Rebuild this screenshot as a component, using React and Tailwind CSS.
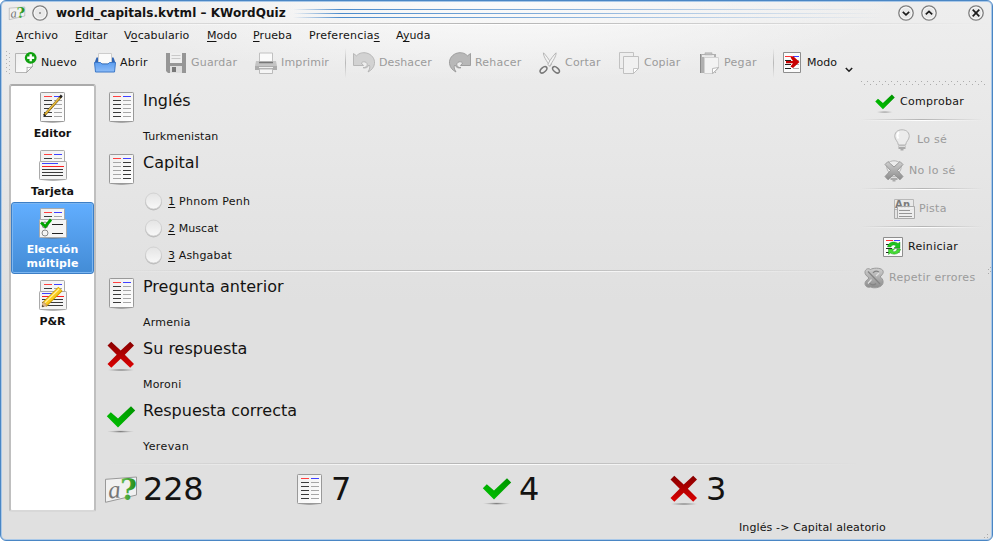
import React from "react";

/* ---------- shared drawing helpers ---------- */

const Shadow = ({ cx = 16, cy = 29.5, rx = 12 }) => (
  <ellipse cx={cx} cy={cy} rx={rx} ry="1.4" fill="url(#shadow)" />
);

const Defs = () => (
  <svg width="0" height="0" className="absolute">
    <defs>
      <radialGradient id="shadow">
        <stop offset="0" stopColor="#555" stopOpacity="0.75" />
        <stop offset="1" stopColor="#888" stopOpacity="0" />
      </radialGradient>
      <linearGradient id="paper" x1="0" y1="0" x2="1" y2="1">
        <stop offset="0" stopColor="#eeeeee" />
        <stop offset="1" stopColor="#ffffff" />
      </linearGradient>
      <linearGradient id="red" x1="0" y1="0" x2="0" y2="1">
        <stop offset="0" stopColor="#860000" />
        <stop offset="1" stopColor="#dd0000" />
      </linearGradient>
      <linearGradient id="green" x1="1" y1="0" x2="0" y2="1">
        <stop offset="0" stopColor="#009200" />
        <stop offset="1" stopColor="#00c400" />
      </linearGradient>
      <linearGradient id="qmark" x1="0" y1="0" x2="1" y2="0">
        <stop offset="0" stopColor="#6fc05a" />
        <stop offset="1" stopColor="#1d8a12" />
      </linearGradient>
      <linearGradient id="blue" x1="0" y1="0" x2="0" y2="1">
        <stop offset="0" stopColor="#5b9df0" />
        <stop offset="1" stopColor="#8cbcf8" />
      </linearGradient>
      <linearGradient id="gray" x1="0" y1="0" x2="0" y2="1">
        <stop offset="0" stopColor="#cfcfcf" />
        <stop offset="1" stopColor="#8c8c8c" />
      </linearGradient>
      <linearGradient id="radio" x1="0" y1="0" x2="0" y2="1">
        <stop offset="0" stopColor="#e4e4e4" />
        <stop offset="1" stopColor="#f8f8f8" />
      </linearGradient>
    </defs>
  </svg>
);

const Svg = ({ size = 32, box = 32, children }) => (
  <svg width={size} height={size} viewBox={`0 0 ${box} ${box}`} className="block shrink-0 overflow-visible">
    {children}
  </svg>
);

/* ---------- 32px icons ---------- */

const ColumnsArt = ({ left = "#3a3a3a", right = "#a6a6a6" }) => (
  <g>
    <Shadow cx={16.5} cy={31} rx={11} />
    <rect x="4.5" y="1.5" width="24" height="29" rx="0.8" fill="url(#paper)" stroke="#999" />
    <rect x="8" y="5" width="8" height="1" fill="#ff4040" />
    <rect x="18" y="5" width="8" height="1" fill="#4040ff" />
    <path d="M8 9.5h8M8 13.5h8M8 17.5h8M8 21.5h8M8 25.5h8" stroke={left} />
    <path d="M18 9.5h8M18 13.5h8M18 17.5h8M18 21.5h8M18 25.5h8" stroke={right} />
  </g>
);

const ColumnsIcon = (p) => (
  <Svg><ColumnsArt {...p} /></Svg>
);

const EditorIcon = () => (
  <Svg>
    <ColumnsArt />
    <path d="M8 24.5L25 5.5" stroke="#4b3a12" strokeWidth="2.6" />
    <path d="M9 23.5L24 6.8" stroke="#d9a520" strokeWidth="1.7" />
    <path d="M9.3 22.4L23 7" stroke="#ffe070" strokeWidth="0.7" />
    <path d="M7.2 26l1-3 2 1.7z" fill="#222" />
    <path d="M24 4.5l2 1.6" stroke="#222" strokeWidth="2.4" />
  </Svg>
);

const CardArt = () => (
  <g>
    <Shadow cx={17} cy={31} rx={13} />
    <rect x="4.5" y="1.5" width="24" height="20" rx="0.8" fill="url(#paper)" stroke="#aaa" />
    <rect x="8" y="5" width="8" height="1" fill="#ff4040" />
    <rect x="18" y="5" width="8" height="1" fill="#4040ff" />
    <path d="M8 9.5h8" stroke="#3a3a3a" />
    <path d="M18 9.5h8" stroke="#a6a6a6" />
    <rect x="3.5" y="12.5" width="27" height="18" rx="0.8" fill="#f5f5f5" stroke="#aaa" />
  </g>
);

const CardLines = () => (
  <g>
    <rect x="6" y="14" width="16" height="1" fill="#4040ff" />
    <rect x="6" y="17" width="22" height="1" fill="#ff2020" />
    <path d="M6 20.5h21M6 23.5h21M6 26.5h21" stroke="#3a3a3a" />
  </g>
);

const CardIcon = () => (
  <Svg>
    <CardArt />
    <CardLines />
  </Svg>
);

const ChoiceIcon = () => (
  <Svg>
    <CardArt />
    <circle cx="9" cy="18" r="3" fill="#f4f4f4" stroke="#888" />
    <circle cx="9" cy="26" r="3" fill="#f4f4f4" stroke="#888" />
    <path d="M16 17.5h11M16 26.5h11" stroke="#222" />
    <path d="M5 15.5l4.3 4L15 12.5" fill="none" stroke="#00a400" strokeWidth="2.8" />
  </Svg>
);

const QaIcon = () => (
  <Svg>
    <CardArt />
    <CardLines />
    <path d="M8.3 25.7L24.5 9.8" stroke="#c79a00" strokeWidth="6" />
    <path d="M8.6 25.2L24.2 9.9" stroke="#fccb1c" strokeWidth="4.4" />
    <path d="M8.6 24L23 10" stroke="#fff0a0" strokeWidth="1.2" />
    <path d="M6 28l1-5.4 4.3 4z" fill="#e2b98a" stroke="#a67c3e" strokeWidth="0.5" />
    <path d="M6 28l.5-2 1.6 1.4z" fill="#333" />
  </Svg>
);

const CrossIcon = () => (
  <Svg>
    <Shadow cx={16} cy={31} rx={14} />
    <path
      d="M2.500 6.500L6.300 2.700 15.700 11.600 25.200 2.700 29 6.500 19.800 15.700 29 25 25.200 28.800 15.700 19.700 6.300 28.800 2.500 25 11.700 15.700z"
      fill="url(#red)"
    />
  </Svg>
);

const CheckIcon = ({ size = 32 }) => (
  <Svg size={size}>
    <Shadow cx={15.5} cy={30.6} rx={13.5} />
    <path d="M1.800 15.200L5.800 11.200 13 17.600 26 5.200 30.200 9.400 13 26.600z" fill="url(#green)" />
  </Svg>
);

const QuizIcon = ({ size = 32 }) => (
  <Svg size={size}>
    <path d="M.5 6.3L31.5 4V22L.5 29.3z" fill="#f1f1f1" stroke="#999" />
    <text x="3.500" y="25.500" fontFamily="Liberation Serif, serif" fontStyle="italic" fontSize="25" fill="#777" transform="rotate(-5 4 24)">a</text>
    <text x="15" y="26.500" fontFamily="DejaVu Serif, serif" fontWeight="bold" fontSize="29" fill="url(#qmark)">?</text>
  </Svg>
);

/* ---------- 22px icons ---------- */

const NewIcon = () => (
  <Svg size={22} box={22}>
    <path d="M.5 1.5h17v13l-6 6H.5z" fill="url(#paper)" stroke="#b5b5b5" />
    <path d="M17.5 14.5l-6 6c.8-2 .8-3.5.4-5.2 2 .5 3.600.2 5.600-.8z" fill="#fff" stroke="#999" strokeWidth="0.8" />
    <circle cx="15.700" cy="5.800" r="5.900" fill="#10a010" />
    <path d="M15.700 2.300v7M12.200 5.800h7" stroke="#fff" strokeWidth="2.400" />
  </Svg>
);

const OpenIcon = () => (
  <Svg size={22} box={22}>
    <path d="M.5 11L2.500 5.500h17L21.500 11z" fill="#2f64b4" />
    <path d="M4.500 1.500h13v10h-13z" fill="#fafafa" stroke="#ccc" />
    <path d="M.5 10.500h6l1.500 1.500h6l1.500-1.500h6l-1 9.500H1.500z" fill="url(#blue)" stroke="#3c78c8" />
  </Svg>
);

const SaveIcon = () => (
  <Svg size={22} box={22}>
    <path d="M1 1h20v20H3l-2-2z" fill="#969696" />
    <path d="M5 1h12v10H5z" fill="#efefef" />
    <path d="M6.500 3.500h9M6.500 6.500h9" stroke="#c9c9c9" />
    <path d="M5 14h12v7H5z" fill="#dedede" />
    <path d="M7 15h4v5H7z" fill="#777" />
  </Svg>
);

const PrintIcon = () => (
  <Svg size={22} box={22}>
    <path d="M4.500 1h13v9h-13z" fill="#fafafa" stroke="#c0c0c0" />
    <path d="M1 9h20l1 5H0z" fill="#c4c4c4" />
    <path d="M4 10.500h14" stroke="#777" strokeWidth="1.600" />
    <path d="M0 14h22v4H0z" fill="#acacac" />
    <path d="M4 15.500h14" stroke="#eee" />
    <path d="M4.500 17h13v4.500h-13z" fill="#f5f5f5" stroke="#bbb" />
  </Svg>
);

const CurlArt = ({ fill, edge }) => (
  <g>
    <path
      d="M.5 1.500L3.500 3.800C6.500.8 10 .2 13.500 1c5 1.200 8.500 5.500 8 10.500-.4 4-3 6.700-6.500 8.500 1.800-3 2.500-5.500 1-7-1.200 2.600-3.500 3.500-6 2.700 2.500 0 4.200-1.200 4.200-3 0-2-1.700-3.200-3.700-2.900-1 .2-1.600.6-2.200 1.200L10.500 13.500H.5z"
      fill={fill}
      stroke={edge}
      strokeWidth="0.900"
      strokeLinejoin="round"
    />
  </g>
);

const UndoIcon = () => (
  <Svg size={22} box={22}><CurlArt fill="#d2d2d2" edge="#b2b2b2" /></Svg>
);

const RedoIcon = () => (
  <Svg size={22} box={22}>
    <g transform="translate(22 0) scale(-1 1)"><CurlArt fill="#b8b8b8" edge="#989898" /></g>
  </Svg>
);

const CutIcon = () => (
  <Svg size={22} box={22}>
    <path d="M4.500.8c-.5 3 3 8 6.500 13.500l1.600-2C10 7 7 3.500 4.500.8z" fill="#f4f4f4" stroke="#a8a8a8" strokeWidth="0.800" />
    <path d="M17 .8c.5 3-3 8-6.500 13.500l-1.600-2C11.500 7 14.500 3.500 17 .8z" fill="#f4f4f4" stroke="#a8a8a8" strokeWidth="0.800" />
    <ellipse cx="4.500" cy="17.800" rx="4" ry="2.300" transform="rotate(-42 4.500 17.800)" fill="none" stroke="#777" strokeWidth="1.500" />
    <ellipse cx="17" cy="17.800" rx="4" ry="2.300" transform="rotate(42 17 17.800)" fill="none" stroke="#777" strokeWidth="1.500" />
  </Svg>
);

const CopyIcon = () => (
  <Svg size={22} box={22}>
    <path d="M1.500.5h14v16h-14z" fill="#eee" stroke="#c2c2c2" />
    <path d="M5.500 4.500h15v12l-5 5h-10z" fill="#f1f1f1" stroke="#c0c0c0" />
    <path d="M20.500 16.500l-5 5v-5z" fill="#fff" stroke="#b8b8b8" strokeWidth="0.800" />
  </Svg>
);

const PasteIcon = () => (
  <Svg size={22} box={22}>
    <path d="M2 2h16v19H2z" fill="#b0b0b0" />
    <path d="M2.500 2v19" stroke="#8c8c8c" />
    <path d="M4 3h12v2H4z" fill="#e9e9e9" />
    <path d="M7 .8h7v2H7z" fill="#c4c4c4" stroke="#aaa" strokeWidth="0.600" />
    <path d="M6.500 5.500h14v11l-5 5h-9z" fill="#f3f3f3" stroke="#d2d2d2" />
    <path d="M20.500 15.500l-6 6v-5z" fill="#fff" stroke="#aaa" strokeWidth="0.800" />
  </Svg>
);

const SmallList = () => (
  <g>
    <rect x="4" y="4" width="7" height="1" fill="#ff3030" />
    <rect x="12" y="4" width="6" height="1" fill="#4040ff" />
    <path d="M4 8.500h6M4 12.500h6M4 16.500h6" stroke="#222" />
    <path d="M12 8.500h6M12 12.500h6M12 16.500h6" stroke="#aaa" />
  </g>
);

const ModeIcon = () => (
  <Svg size={22} box={22}>
    <path d="M2.500.5h17v20h-17z" fill="#fbfbfb" stroke="#8e8e8e" />
    <SmallList />
    <path d="M5 9h7L9.500 5.500 12 4l6.500 6-6.500 6-2.500-1.500L12 11.200H5z" fill="#c80000" />
  </Svg>
);

const BulbArt = () => (
  <g>
    <path d="M11 .8c-5 0-7.500 3.200-7.200 7 .3 3.200 3.200 4.600 3.600 8.200h7.200c.4-3.600 3.300-5 3.600-8.200.3-3.800-2.200-7-7.200-7z" fill="#ececec" stroke="#b5b5b5" />
    <path d="M8 3.500c-2 1-2 4-.5 6" fill="none" stroke="#fff" strokeWidth="2" />
    <path d="M7.500 16.500h7v3.500h-2v1.500h-3V20h-2z" fill="#aaa" />
    <path d="M8 17.500h6" stroke="#ddd" />
  </g>
);

const BulbIcon = () => (
  <Svg size={22} box={22}><BulbArt /></Svg>
);

const NotKnownIcon = () => (
  <Svg size={22} box={22}>
    <BulbArt />
    <path
      d="M2 4.500l3-3L11 7l6-5.500 3 3L14.500 10.500l5.500 6-3 3.300L11 14l-6 5.800-3-3.300 5.500-6z"
      fill="url(#gray)"
      stroke="#8a8a8a"
      strokeWidth="0.800"
    />
  </Svg>
);

const HintIcon = () => (
  <Svg size={22} box={22}>
    <path d="M1.500 1.500h19v10h-19z" fill="#e9e9e9" stroke="#b8b8b8" />
    <text x="2" y="9.500" fontFamily="DejaVu Sans, sans-serif" fontWeight="bold" fontSize="10" fill="#7a7a7a">An</text>
    <path d="M4.500 8.500h17v12h-17z" fill="#f0f0f0" fillOpacity="0.850" stroke="#aaa" />
    <path d="M6 12.500h11M6 15.500h13M6 18.500h13" stroke="#969696" />
    <path d="M1.500 11v9.500h3" fill="none" stroke="#aaa" />
  </Svg>
);

const RestartIcon = () => (
  <Svg size={22} box={22}>
    <path d="M1.500 1.500h19v19h-19z" fill="#fbfbfb" stroke="#8e8e8e" />
    <SmallList />
    <path d="M5.500 11c.5-5 7-6.500 10.500-3.500l2-1.500v6h-6l2-2c-2-2-4.500-1-5 1z" fill="#20c420" stroke="#128a12" strokeWidth="0.400" />
    <path d="M18.500 13c-.5 5-7 6.500-10 4l-2 1.500V13h6l-2 2c1.500 1.500 4 .5 4.500-2z" fill="#45dc35" stroke="#128a12" strokeWidth="0.400" />
  </Svg>
);

const RepeatIcon = () => (
  <Svg size={22} box={22}>
    <path
      d="M2 4.500C3 1.500 5.500 1 7.500 2.500 10 .8 17 .5 19.500 3c1.800 2.500 0 4.500-2.500 7 2.500 1 4 4.500 2.500 7.500-2.500 3.500-9 4-12 2.500-2.500 1-5.500-.5-5.500-3.500 0-2 1.500-3 4-5.500-2.500-2-4.500-4-4-6.500z"
      fill="url(#gray)"
      stroke="#999"
    />
    <path d="M5 4.500l12 12.500M16 5c-3-1.500-5-.5-6 1M6 15.500c2 3 5 3 7 1" fill="none" stroke="#848484" strokeWidth="1.200" />
    <path d="M8.500 12.500l-3.500 4M16 6l-3 3" stroke="#e0e0e0" strokeWidth="1.200" />
  </Svg>
);

/* ---------- window pieces ---------- */

const WindowButton = ({ children }) => (
  <svg width="16" height="16" viewBox="0 0 16 16" className="block shrink-0">
    <circle cx="8" cy="8" r="7.200" fill="#e9e9e9" stroke="#7d7d7d" strokeWidth="1.300" />
    <circle cx="8" cy="8" r="5.800" fill="none" stroke="#fafafa" strokeWidth="0.800" />
    <g fill="none" stroke="#1c1c1c" strokeWidth="1.700">{children}</g>
  </svg>
);

const TitleLine = () => (
  <div className="h-px bg-[linear-gradient(to_right,#4a8acb00,#4a8acb_8%,#8fb5dd_50%,#8fb5dd00)]" />
);

const TitleBar = () => (
  <header className="flex h-[24px] shrink-0 items-center pl-[8px] pr-[8px]">
    <QuizIcon size={16} />
    <div className="ml-[7px]">
      <WindowButton><circle cx="8" cy="8" r="0.700" fill="#222" stroke="none" /></WindowButton>
    </div>
    <h1 className="ml-[8px] w-[237px] whitespace-nowrap text-[12px] font-bold leading-[24px] tracking-[0.03px]">world_capitals.kvtml – KWordQuiz</h1>
    <div className="mt-px flex w-[590px] flex-col gap-[3px]">
      <TitleLine />
      <TitleLine />
      <TitleLine />
    </div>
    <div className="ml-auto flex">
      <WindowButton><path d="M4.800 6.800L8 9.800l3.200-3" /></WindowButton>
      <div className="ml-[7px]"><WindowButton><path d="M4.800 9.300L8 6.300l3.200 3" /></WindowButton></div>
      <div className="ml-[31px]"><WindowButton><path d="M4.700 4.700l6.600 6.600M11.300 4.700l-6.600 6.600" /></WindowButton></div>
    </div>
  </header>
);

const MENUS = [
  ["", "A", "rchivo", "w-[59px] tracking-[0.15px]"],
  ["", "E", "ditar", "w-[49px]"],
  ["V", "o", "cabulario", "w-[83px] tracking-[0.1px]"],
  ["", "M", "odo", "w-[46px]"],
  ["", "P", "rueba", "w-[56px] tracking-[0.1px]"],
  ["Preferencia", "s", "", "w-[87px] tracking-[0.25px]"],
  ["A", "y", "uda", "w-[50px] tracking-[0.1px]"],
];

const MenuBar = () => (
  <nav className="flex h-[21px] shrink-0 items-center pl-[15px] pt-px">
    {MENUS.map(([a, key, b, w]) => (
      <span key={a + key + b} className={`${w} shrink-0 whitespace-nowrap`}>
        {a}<span className="underline decoration-1 underline-offset-2">{key}</span>{b}
      </span>
    ))}
  </nav>
);

const Tool = ({ icon, label, w, disabled }) => (
  <div className={`flex shrink-0 items-center gap-[4px] whitespace-nowrap ${w} ${disabled ? "text-[#9b9b9b]" : ""}`}>
    {icon}
    <span>{label}</span>
  </div>
);

const VSep = ({ w }) => (
  <div className={`${w} shrink-0`}>
    <div className="h-[30px] w-px bg-linear-to-b from-transparent via-[#b8b8b8] to-transparent" />
  </div>
);

const ToolBar = () => (
  <div className="mt-px flex h-[32px] shrink-0 items-center pl-[5px]">
    <svg width="9" height="26" className="block shrink-0">
      {[0, 1, 2, 3, 4, 5].map((i) => (
        <g key={i} fill="#b4b4b4">
          <rect x="0" y={i * 4 + 1} width="1" height="1" />
          <rect x="3" y={i * 4 + 3} width="1" height="1" />
        </g>
      ))}
    </svg>
    <Tool icon={<NewIcon />} label="Nuevo" w="w-[79px] tracking-[0.1px]" />
    <Tool icon={<OpenIcon />} label="Abrir" w="w-[71px] tracking-[0.2px]" />
    <Tool icon={<SaveIcon />} label="Guardar" w="w-[90px] tracking-[0.2px]" disabled />
    <Tool icon={<PrintIcon />} label="Imprimir" w="w-[90px] tracking-[0.15px]" disabled />
    <VSep w="w-[8px]" />
    <Tool icon={<UndoIcon />} label="Deshacer" w="w-[96px] tracking-[0.1px]" disabled />
    <Tool icon={<RedoIcon />} label="Rehacer" w="w-[90px] tracking-[0.2px]" disabled />
    <Tool icon={<CutIcon />} label="Cortar" w="w-[79px] tracking-[0.2px]" disabled />
    <Tool icon={<CopyIcon />} label="Copiar" w="w-[80px] tracking-[0.1px]" disabled />
    <Tool icon={<PasteIcon />} label="Pegar" w="w-[75px] tracking-[0.3px]" disabled />
    <VSep w="w-[8px]" />
    <Tool icon={<ModeIcon />} label="Modo" w="w-[64px]" />
    <svg width="8" height="6" className="mt-[14px] block shrink-0">
      <path d="M.8 1L4 4.200 7.200 1" fill="none" stroke="#222" strokeWidth="1.600" />
    </svg>
  </div>
);

const View = ({ icon, lines, h, selected }) => (
  <div
    className={`flex ${h} shrink-0 flex-col text-center font-bold leading-[14px] ${
      selected
        ? "rounded-[3px] border border-[#3d7fc6] bg-linear-to-b from-[#62aeff] to-[#438cd6] pt-[4px] text-white shadow-[inset_0_0_0_1px_#7cb6f1]"
        : "pt-[5px]"
    }`}
  >
    <div className={selected ? "pl-[24px]" : "pl-[25px]"}>{icon}</div>
    <div className={selected ? "mt-[4px] tracking-[0.1px]" : "mt-[4px]"}>
      {lines.map((l) => <div key={l}>{l}</div>)}
    </div>
  </div>
);

const SideBar = () => (
  <aside className="ml-[8px] mt-[5px] flex h-[428px] w-[87px] shrink-0 flex-col rounded-[3px] border-2 border-[#bfbfbf] border-b-[#d8d8d8] border-t-[#ababab] bg-white">
    <View icon={<EditorIcon />} lines={["Editor"]} h="h-[58px]" />
    <View icon={<CardIcon />} lines={["Tarjeta"]} h="h-[58px]" />
    <View icon={<ChoiceIcon />} lines={["Elección", "múltiple"]} h="h-[72px]" selected />
    <View icon={<QaIcon />} lines={["P&R"]} h="h-[58px]" />
  </aside>
);

const Section = ({ icon, title, value, h = "h-[62px]", track = "" }) => (
  <section className={`flex ${h} shrink-0 gap-[6px]`}>
    {icon}
    <div>
      <h2 className="h-[20px] whitespace-nowrap text-[16px] leading-[20px]">{title}</h2>
      {value && <p className={`mt-[19px] leading-[14px] ${track}`}>{value}</p>}
    </div>
  </section>
);

const Option = ({ n, text, track = "" }) => (
  <label className="flex h-[27px] items-center pl-[40px]">
    <svg width="18" height="20" className="block">
      <circle cx="8.500" cy="10.200" r="8.300" fill="#bcbcbc" />
      <circle cx="8.500" cy="9" r="8" fill="url(#radio)" stroke="#cacaca" strokeWidth="0.700" />
    </svg>
    <span className={`ml-[5px] whitespace-pre ${track}`}><span className="underline decoration-1 underline-offset-2">{n}</span> {text}</span>
  </label>
);

const HRule = ({ className }) => (
  <div className={`shrink-0 ${className}`}>
    <div className="h-px bg-linear-to-r from-transparent via-[#b4b4b4] to-transparent" />
    <div className="h-px bg-linear-to-r from-transparent via-white to-transparent" />
  </div>
);

const Stat = ({ icon, value, w = "w-[188px]" }) => (
  <div className={`flex ${w} shrink-0 gap-[6px]`}>
    {icon}
    <span className="text-[32px] leading-[32px] tracking-[-0.2px]">{value}</span>
  </div>
);

const QuizPanel = () => (
  <main className="flex w-[756px] shrink-0 flex-col pl-[9px] pt-[12px]">
    <Section icon={<ColumnsIcon />} title="Inglés" value="Turkmenistan" track="tracking-[0.1px]" />
    <Section icon={<ColumnsIcon left="#a6a6a6" right="#3a3a3a" />} title="Capital" h="h-[35px]" />
    <div className="h-[81px] shrink-0">
      <Option n="1" text="Phnom Penh" track="tracking-[0.27px]" />
      <Option n="2" text="Muscat" track="tracking-[0.08px]" />
      <Option n="3" text="Ashgabat" track="tracking-[0.15px]" />
    </div>
    <HRule className="mb-[5px] mt-px w-[755px]" />
    <Section icon={<ColumnsIcon />} title="Pregunta anterior" value="Armenia" track="tracking-[0.25px]" />
    <Section icon={<CrossIcon />} title="Su respuesta" value="Moroni" track="tracking-[0.2px]" />
    <Section icon={<CheckIcon />} title="Respuesta correcta" value="Yerevan" track="tracking-[0.4px]" />
    <HRule className="mb-[8px] w-[755px]" />
    <div className="flex">
      <Stat icon={<QuizIcon />} value="228" />
      <Stat icon={<ColumnsIcon />} value="7" />
      <Stat icon={<CheckIcon />} value="4" w="w-[187px]" />
      <Stat icon={<CrossIcon />} value="3" />
    </div>
  </main>
);

const Action = ({ icon, label, disabled, h = "h-[31px]", pad }) => (
  <div className={`flex ${h} ${pad} shrink-0 items-center gap-[4px] whitespace-nowrap tracking-[0.3px] ${disabled ? "text-[#9b9b9b]" : ""}`}>
    {icon}
    <span>{label}</span>
  </div>
);

const ActionPanel = () => (
  <aside className="flex w-[130px] shrink-0 flex-col pt-[2px]">
    <svg width="126" height="5" className="block shrink-0">
      {Array.from({ length: 21 }, (_, i) => (
        <g key={i} fill="#acacac">
          <rect x={i * 6} y="0" width="1" height="1" />
          <rect x={i * 6 + 3} y="3" width="1" height="1" />
        </g>
      ))}
    </svg>
    <Action icon={<CheckIcon size={22} />} label="Comprobar" pad="pl-[13px]" h="h-[31px]" />
    <HRule className="mb-[3px] mt-[2px] w-[122px]" />
    <Action icon={<BulbIcon />} label="Lo sé" pad="pl-[30px]" disabled />
    <Action icon={<NotKnownIcon />} label="No lo sé" pad="pl-[22px]" disabled />
    <HRule className="mb-[3px] mt-[2px] w-[122px]" />
    <Action icon={<HintIcon />} label="Pista" pad="pl-[32px]" disabled />
    <HRule className="mb-[3px] mt-[2px] w-[122px]" />
    <Action icon={<RestartIcon />} label="Reiniciar" pad="pl-[21px]" />
    <Action icon={<RepeatIcon />} label="Repetir errores" pad="pl-[2px]" disabled />
  </aside>
);

export default function App() {
  return (
    <div className="h-[541px] w-[993px] bg-white font-['DejaVu_Sans',sans-serif] text-[11px] leading-[14px] text-[#141312]">
      <Defs />
      <div className="flex h-full flex-col overflow-hidden rounded-[6px] border border-[#4a86c4] bg-[radial-gradient(ellipse_400px_80px_at_50%_0,#fbfbfb,transparent),linear-gradient(to_bottom,#eeeeee,#e0e0e0_300px)] shadow-[inset_0_0_0_1px_#a9c8e8]">
        <TitleBar />
        <HRule className="-mt-[2px] w-[991px]" />
        <MenuBar />
        <ToolBar />
        <div className="flex h-[436px] shrink-0">
          <SideBar />
          <QuizPanel />
          <div className="ml-[9px] flex">
            <ActionPanel />
            <svg width="4" height="12" className="ml-[-3px] mt-[187px] block">
              <g fill="#aaa">
                <rect x="0" y="3" width="1" height="1" />
                <rect x="0" y="7" width="1" height="1" />
                <rect x="2" y="1" width="1" height="1" />
                <rect x="2" y="5" width="1" height="1" />
              </g>
            </svg>
          </div>
        </div>
        <footer className="flex h-[26px] shrink-0 items-center justify-between pl-[738px]">
          <span className="whitespace-nowrap tracking-[0.12px]">Inglés -&gt; Capital aleatorio</span>
          <svg width="8" height="24" className="block">
            <g fill="#aaa">
              <rect x="0" y="21" width="1" height="1" />
              <rect x="3" y="18" width="1" height="1" />
              <rect x="3" y="21" width="1" height="1" />
            </g>
          </svg>
        </footer>
      </div>
    </div>
  );
}
